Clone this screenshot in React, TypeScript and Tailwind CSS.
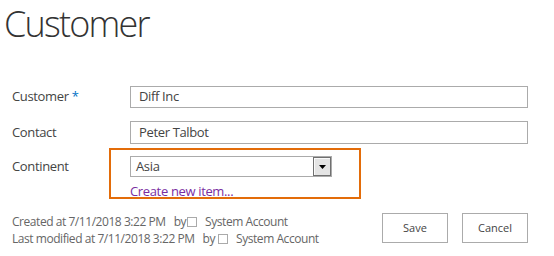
import React from "react";

export default function App() {
  const font = { fontFamily: '"Segoe UI", "Open Sans", "Noto Sans", sans-serif' };
  return (
    <div className="w-[554px] h-[256px] bg-white text-[#333] overflow-hidden" style={font}>
      <div className="pl-[4px] pt-[0px] h-[70px]">
        <h1 className="text-[36px] font-light leading-[48px] text-[#333] tracking-[-1.8px]">Customer</h1>
      </div>
      <div className="pl-[12px] pr-[26px] text-[13px] tracking-[-0.35px]">
        <div className="flex items-center h-[22px] mt-[16px]">
          <div className="w-[118px] text-[#444]">
            Customer <span className="text-[#0072c6]">*</span>
          </div>
          <div className="flex-1 h-[22px] border border-[#ababab] bg-white flex items-center px-[8px] text-[#444]">
            Diff Inc
          </div>
        </div>
        <div className="flex items-center h-[23px] mt-[13px]">
          <div className="w-[118px] text-[#444]">Contact</div>
          <div className="flex-1 h-[23px] border border-[#ababab] bg-white flex items-center px-[8px] text-[#444]">
            Peter Talbot
          </div>
        </div>
        <div className="flex mt-[4px]">
          <div className="w-[97px] text-[#444] pt-[9px]">Continent</div>
          <div className="w-[252px] h-[51px] border-2 border-[#e36c09] pl-[19px] pt-[6px]">
            <div className="w-[202px] h-[21px] border border-[#ababab] flex items-center bg-white">
              <div className="flex-1 pl-[5px] text-[#444]">Asia</div>
              <div className="w-[18px] h-[19px] border border-[#707070] bg-[#e4e4e4] shadow-[inset_1px_1px_0_#fafafa] flex items-center justify-center">
                <svg width="7" height="4" viewBox="0 0 7 4">
                  <path d="M0 0 H7 L3.5 4 Z" fill="#000" />
                </svg>
              </div>
            </div>
            <div className="text-[#7a2da1] leading-[16px] mt-[6px]">Create new item...</div>
          </div>
        </div>
        <div className="flex justify-between items-start mt-[14px]">
          <div className="text-[12px] text-[#666] leading-[17px] tracking-[-0.45px]">
            <div className="flex items-center">
              <span>Created at 7/11/2018 3:22 PM</span>
              <span className="ml-[8px]">by</span>
              <span className="inline-block w-[10px] h-[10px] border border-[#aaa] ml-[1px] mr-[8px]"></span>
              <span>System Account</span>
            </div>
            <div className="flex items-center">
              <span>Last modified at 7/11/2018 3:22 PM</span>
              <span className="ml-[8px]">by</span>
              <span className="inline-block w-[10px] h-[10px] border border-[#aaa] ml-[3px] mr-[8px]"></span>
              <span>System Account</span>
            </div>
          </div>
          <div className="flex gap-[14px] mt-[0px] tracking-normal">
            <button className="w-[66px] h-[30px] border border-[#ababab] bg-white text-[11px] text-[#444]">Save</button>
            <button className="w-[66px] h-[30px] border border-[#ababab] bg-white text-[11px] text-[#444]">Cancel</button>
          </div>
        </div>
      </div>
    </div>
  );
}
